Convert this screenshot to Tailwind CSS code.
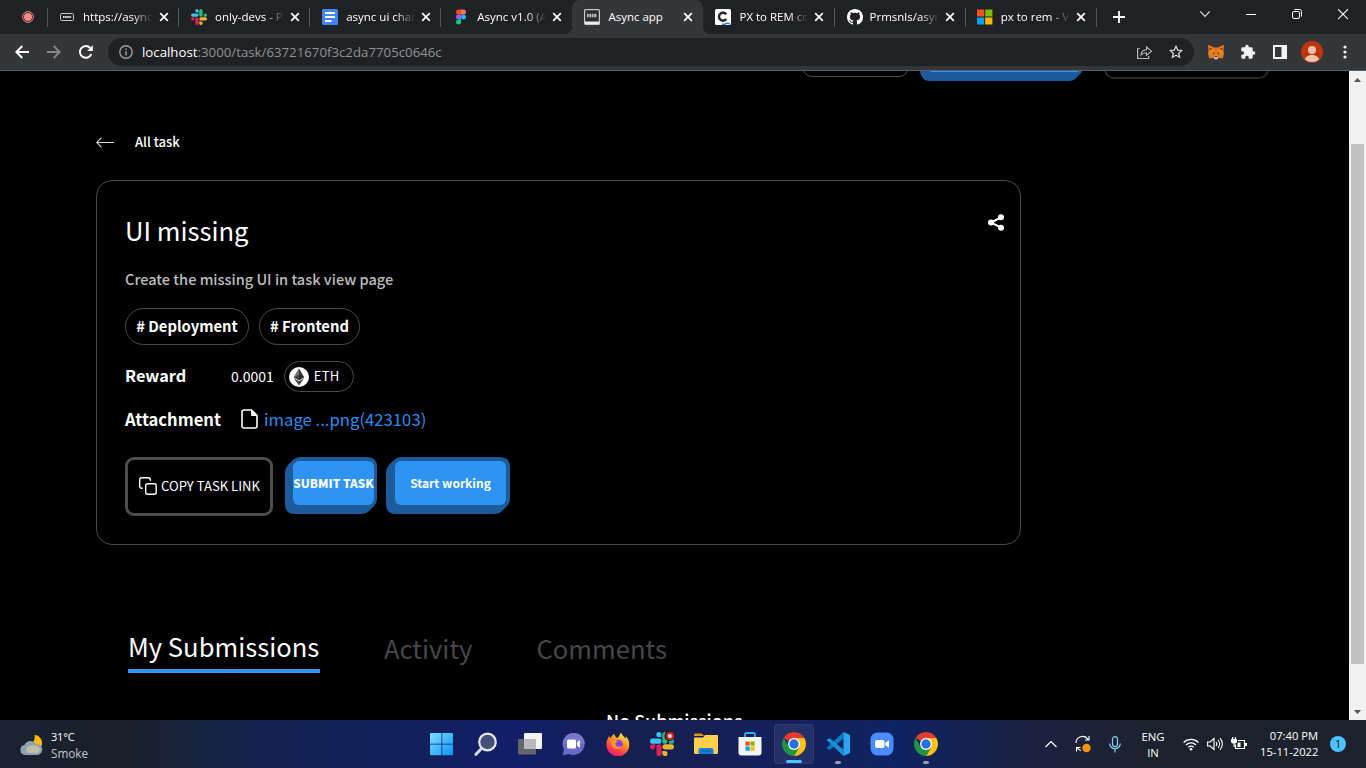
<!DOCTYPE html>
<html lang="en">
<head>
<meta charset="utf-8">
<title>Async app</title>
<script src="https://cdn.jsdelivr.net/npm/@tailwindcss/browser@4"></script>
</head>
<body class="w-[1366px] h-[768px] overflow-hidden bg-black font-['Open_Sans',sans-serif] text-white flex flex-col">

<svg class="hidden">
  <symbol id="x" viewBox="0 0 10 10"><path d="M1.2 1.2l7.6 7.6M8.8 1.2L1.2 8.8" stroke="#fff" stroke-width="1.7"/></symbol>
  <symbol id="slack" viewBox="0 0 16 16">
    <path fill="#36c5f0" d="M5.9 0a1.7 1.7 0 0 0 0 3.4h1.7V1.7A1.7 1.7 0 0 0 5.9 0zM5.9 4.4H1.7a1.7 1.7 0 0 0 0 3.4h4.2a1.7 1.7 0 0 0 0-3.4z"/>
    <path fill="#2eb67d" d="M16 6.1a1.7 1.7 0 0 0-3.4 0v1.7h1.7A1.7 1.7 0 0 0 16 6.1zM11.600 6.1V1.700a1.700 1.700 0 0 0-3.400 0v4.400a1.700 1.700 0 0 0 3.400 0z"/>
    <path fill="#ecb22e" d="M10 16a1.700 1.700 0 0 0 0-3.400H8.200v1.700A1.700 1.700 0 0 0 10 16zM10 11.600h4.300a1.700 1.700 0 0 0 0-3.400H10a1.700 1.700 0 0 0 0 3.400z"/>
    <path fill="#e01e5a" d="M0 9.900a1.700 1.700 0 0 0 3.400 0V8.200H1.700A1.700 1.700 0 0 0 0 9.900zM4.300 9.900v4.400a1.700 1.700 0 0 0 3.400 0V9.900a1.700 1.700 0 0 0-3.400 0z"/>
  </symbol>
  <symbol id="chrome" viewBox="0 0 24 24">
    <path fill="#e33b2e" d="M12 12L1.610 6A12 12 0 0 1 22.390 6z"/>
    <path fill="#fbc116" d="M12 12V6h10.390A12 12 0 0 1 12 24l5.200-9z"/>
    <path fill="#229342" d="M12 24A12 12 0 0 1 1.610 6l5.200 9L12 17.500l5.200-2.500z"/>
    <circle cx="12" cy="12" r="6" fill="#fff"/><circle cx="12" cy="12" r="4.700" fill="#2a6fe0"/>
  </symbol>
</svg>

<!-- tab strip -->
<header class="h-[34px] shrink-0 bg-[#202124] flex text-[11.5px] leading-[34px] font-medium">
  <div class="w-[48px] shrink-0 flex items-center justify-center pl-[8px] relative">
    <svg class="w-3 h-3" viewBox="0 0 12 12"><circle cx="6" cy="6" r="5.400" fill="none" stroke="#f28b82" stroke-width="1"/><circle cx="6" cy="6" r="4" fill="#f28b82"/></svg>
    <i class="absolute right-0 top-[8px] h-[19px] w-px bg-[#55585d]"></i>
  </div>
  <div class="w-[131.1px] shrink-0 pl-3 flex items-center relative">
    <svg class="w-4 h-4" viewBox="0 0 16 16"><rect x=".500" y="4.500" width="13" height="7" rx="1" fill="#202124" stroke="#c8c8c8"/><path d="M3 8h8.500" stroke="#ddd" stroke-width="2" stroke-dasharray="1.600 .500"/></svg>
    <span class="ml-[7px] w-[72px] whitespace-nowrap overflow-hidden [mask-image:linear-gradient(90deg,#000_50px,transparent_69px)]">https://async-</span>
    <svg class="w-[10px] h-[10px] ml-[4px]"><use href="#x"/></svg>
    <i class="absolute right-0 top-[8px] h-[19px] w-px bg-[#55585d]"></i>
  </div>
  <div class="w-[131.1px] shrink-0 pl-3 flex items-center relative">
    <svg class="w-4 h-4"><use href="#slack"/></svg>
    <span class="ml-2 w-[71px] whitespace-nowrap overflow-hidden [mask-image:linear-gradient(90deg,#000_50px,transparent_69px)]">only-devs - P</span>
    <svg class="w-[10px] h-[10px] ml-[4px]"><use href="#x"/></svg>
    <i class="absolute right-0 top-[8px] h-[19px] w-px bg-[#55585d]"></i>
  </div>
  <div class="w-[131.1px] shrink-0 pl-3 flex items-center relative">
    <svg class="w-4 h-4" viewBox="0 0 16 16"><rect width="16" height="16" rx="1.500" fill="#4285f4"/><path d="M3 4h10M3 8h10M3 12h6.500" stroke="#fff" stroke-width="1.800"/></svg>
    <span class="ml-2 w-[71px] whitespace-nowrap overflow-hidden [mask-image:linear-gradient(90deg,#000_50px,transparent_69px)]">async ui chan</span>
    <svg class="w-[10px] h-[10px] ml-[4px]"><use href="#x"/></svg>
    <i class="absolute right-0 top-[8px] h-[19px] w-px bg-[#55585d]"></i>
  </div>
  <div class="w-[131.1px] shrink-0 pl-3 flex items-center relative">
    <svg class="w-4 h-4" viewBox="0 0 16 16"><path fill="#f24e1e" d="M8 .500H5.500a2.500 2.500 0 0 0 0 5H8z"/><path fill="#ff7262" d="M8 .500h2.500a2.500 2.500 0 0 1 0 5H8z"/><path fill="#a259ff" d="M8 5.500H5.500a2.500 2.500 0 0 0 0 5H8z"/><circle cx="10.500" cy="8" r="2.500" fill="#1abcfe"/><path fill="#0acf83" d="M8 10.500H5.500A2.500 2.500 0 1 0 8 13z"/></svg>
    <span class="ml-2 w-[71px] whitespace-nowrap overflow-hidden [mask-image:linear-gradient(90deg,#000_50px,transparent_69px)]">Async v1.0 (A</span>
    <svg class="w-[10px] h-[10px] ml-[4px]"><use href="#x"/></svg>
  </div>
  <div class="w-[131.1px] shrink-0 pl-3 flex items-center relative bg-[#35363a] rounded-t-lg">
    <i class="absolute -left-2 bottom-0 w-2 h-2 bg-[radial-gradient(circle_at_0_0,#202124_8px,#35363a_8.5px)]"></i>
    <i class="absolute -right-2 bottom-0 w-2 h-2 bg-[radial-gradient(circle_at_100%_0,#202124_8px,#35363a_8.5px)]"></i>
    <svg class="w-4 h-4" viewBox="0 0 16 16"><rect x=".600" y=".600" width="14.800" height="14.800" rx="1" fill="#2c2d30" stroke="#c9c9c9" stroke-width="1.200"/><path d="M1 12.500h14v2.500H1z" fill="#eee"/><path d="M3 6.500h10" stroke="#bbb" stroke-width="3.500" stroke-dasharray="1.800 .600"/></svg>
    <span class="ml-2 whitespace-nowrap">Async app</span>
    <svg class="w-[10px] h-[10px] absolute left-[111px]"><use href="#x"/></svg>
  </div>
  <div class="w-[131.1px] shrink-0 pl-3 flex items-center relative">
    <svg class="w-4 h-4" viewBox="0 0 16 16"><rect width="16" height="16" rx="1.500" fill="#fff"/><path d="M11.300 5.400A4 4 0 1 0 11.300 10" fill="none" stroke="#222" stroke-width="2.400"/><path d="M7 14.800q2 1.200 3.500 0t4.500 0" fill="none" stroke="#2b7bf0" stroke-width="1.400"/></svg>
    <span class="ml-2 w-[71px] whitespace-nowrap overflow-hidden [mask-image:linear-gradient(90deg,#000_50px,transparent_69px)]">PX to REM co</span>
    <svg class="w-[10px] h-[10px] ml-[4px]"><use href="#x"/></svg>
    <i class="absolute right-0 top-[8px] h-[19px] w-px bg-[#55585d]"></i>
  </div>
  <div class="w-[131.1px] shrink-0 pl-3 flex items-center relative">
    <svg class="w-4 h-4" viewBox="0 0 16 16"><path fill="#fff" d="M8 0C3.580 0 0 3.580 0 8c0 3.540 2.290 6.530 5.470 7.590.4.070.55-.17.55-.38 0-.19-.01-.82-.01-1.490-2.010.37-2.530-.49-2.690-.94-.09-.23-.48-.94-.82-1.130-.28-.15-.68-.52-.01-.53.63-.01 1.080.58 1.230.82.72 1.210 1.870.87 2.330.66.07-.52.28-.87.51-1.070-1.780-.2-3.640-.89-3.640-3.950 0-.87.31-1.590.82-2.150-.08-.2-.36-1.020.08-2.120 0 0 .67-.21 2.200.82.64-.18 1.320-.27 2-.27s1.360.09 2 .27c1.530-1.040 2.200-.82 2.200-.82.44 1.100.16 1.920.08 2.120.51.56.82 1.270.82 2.150 0 3.070-1.870 3.750-3.650 3.950.29.25.54.73.54 1.480 0 1.070-.01 1.930-.01 2.200 0 .21.15.46.55.38A8.010 8.010 0 0 0 16 8c0-4.420-3.580-8-8-8z"/></svg>
    <span class="ml-[7px] w-[71px] whitespace-nowrap overflow-hidden [mask-image:linear-gradient(90deg,#000_50px,transparent_69px)]">Prmsnls/asyn</span>
    <svg class="w-[10px] h-[10px] ml-[4px]"><use href="#x"/></svg>
    <i class="absolute right-0 top-[8px] h-[19px] w-px bg-[#55585d]"></i>
  </div>
  <div class="w-[131.1px] shrink-0 pl-[11px] flex items-center relative">
    <svg class="w-4 h-4" viewBox="0 0 16 16"><path fill="#f25022" d="M0 .500h7.200v7H0z"/><path fill="#7fba00" d="M8.200.500h7.200v7H8.200z"/><path fill="#00a4ef" d="M0 8.500h7.200v7H0z"/><path fill="#ffb900" d="M8.200 8.500h7.200v7H8.200z"/></svg>
    <span class="ml-2 w-[71px] whitespace-nowrap overflow-hidden [mask-image:linear-gradient(90deg,#000_50px,transparent_69px)]">px to rem - V</span>
    <svg class="w-[10px] h-[10px] ml-[4px]"><use href="#x"/></svg>
    <i class="absolute right-0 top-[8px] h-[19px] w-px bg-[#55585d]"></i>
  </div>
  <svg class="w-[12px] h-[12px] ml-4 mt-[11px]" viewBox="0 0 12 12"><path d="M6 0v12M0 6h12" stroke="#fff" stroke-width="1.800"/></svg>
  <div class="ml-auto mr-[18px] flex">
    <svg class="w-[10px] h-[34px] mr-[36px]" viewBox="0 0 10 34"><path d="M.300 11.500L5 16.500l4.700-5" fill="none" stroke="#ddd" stroke-width="1.100"/></svg>
    <svg class="w-[10px] h-[34px] mr-[36px]" viewBox="0 0 10 34"><path d="M0 14.500h10" stroke="#fff"/></svg>
    <svg class="w-[10px] h-[34px] mr-[36px]" viewBox="0 0 10 34"><rect x=".500" y="11.500" width="7" height="7" rx="1.500" fill="none" stroke="#fff"/><path d="M2.500 9.500H7.500a2 2 0 0 1 2 2V16.500" fill="none" stroke="#fff"/></svg>
    <svg class="w-[10px] h-[34px]" viewBox="0 0 10 34"><path d="M0 9.200l10 10M10 9.200l-10 10" stroke="#fff" stroke-width="1.100"/></svg>
  </div>
</header>

<!-- toolbar -->
<nav class="h-[37px] shrink-0 bg-[#35363a] border-b border-[#5b5e62] flex items-center">
  <svg class="w-[14px] h-[14px] ml-[15px]" viewBox="0 0 14 14"><path d="M14 7H1.500M7.300 1L1.300 7l6 6" fill="none" stroke="#fff" stroke-width="1.900"/></svg>
  <svg class="w-[14px] h-[14px] ml-[18px]" viewBox="0 0 14 14"><path d="M0 7h12.500M6.700 1l6 6-6 6" fill="none" stroke="#85878a" stroke-width="1.900"/></svg>
  <svg class="w-[14px] h-[14px] ml-[18px]" viewBox="0 0 14 14"><path d="M12.300 9.200A5.900 5.900 0 1 1 11.300 3" fill="none" stroke="#fff" stroke-width="1.900"/><path d="M13.800.300V6H8.200z" fill="#fff"/></svg>
  <div class="ml-[15px] w-[1086px] h-7 rounded-full bg-[#202124] flex items-center text-[13.25px]">
    <svg class="ml-[11px] w-[14px] h-[14px]" viewBox="0 0 14 14"><circle cx="7" cy="7" r="6.200" fill="none" stroke="#9aa0a6" stroke-width="1.400"/><path d="M7 6.200v4.300M7 3.400v1.500" stroke="#9aa0a6" stroke-width="1.500"/></svg>
    <span class="ml-[9px] pt-px text-[#8f9398]"><span class="text-white">localhost</span>:3000/task/63721670f3c2da7705c0646c</span>
    <svg class="ml-auto w-4 h-4" viewBox="0 0 16 16"><path d="M.600 4.500V14.500h11V12M.600 4.500h2" fill="none" stroke="#b8babd" stroke-width="1.200"/><path d="M4 11c.300-3.200 2.200-5 5.500-5.200V3l5 4.200-5 4.200V8.700C7 8.700 5.300 9.400 4 11z" fill="none" stroke="#b8babd" stroke-width="1.100"/></svg>
    <svg class="ml-4 mr-[11px] w-[14px] h-[14px]" viewBox="0 0 14 14"><path d="M7 1.300l1.700 3.800 4.100.400-3.100 2.700.9 4.100L7 10.200l-3.600 2.100.9-4.100L1.200 5.500l4.100-.4z" fill="none" stroke="#d0d2d5" stroke-width="1.300"/></svg>
  </div>
  <svg class="ml-[14px] w-4 h-4" viewBox="0 0 16 16"><path fill="#e2761b" d="M0 .800L6 3.500h4l6-2.700-.6 6 .6 3.400-1.400 4.300-3.800-.8L9 15.500H7l-1.800-1.800-3.800.8L0 10.200l.6-3.400z"/><path fill="#f6a13b" d="M1 1.500L6 5l-1 4-4 .500L2 6zM15 1.500L10 5l1 4 4 .500L14 6z" opacity=".45"/><path fill="#763d16" d="M1.300 3.500L2 6l3-1zM14.700 3.500L14 6l-3-1z"/><path fill="#233447" d="M4.500 8.500l2 .5-.5 1.200zM11.500 8.500l-2 .5.5 1.200z"/><path fill="#d7c1b3" d="M5.500 13l1.300-1.300h2.400l1.300 1.300L9 15.200H7z"/><path fill="#161616" d="M6.600 12.200h2.800v1H6.600z"/></svg>
  <svg class="ml-4 w-4 h-4" viewBox="0 0 24 24"><path fill="#f1f3f4" d="M20.500 11H19V7a2 2 0 0 0-2-2h-4V3.500a2.500 2.500 0 0 0-5 0V5H4a2 2 0 0 0-2 2v3.800h1.500a2.700 2.700 0 0 1 0 5.400H2V20a2 2 0 0 0 2 2h3.800v-1.500a2.700 2.700 0 0 1 5.400 0V22H17a2 2 0 0 0 2-2v-4h1.500a2.500 2.500 0 0 0 0-5z"/></svg>
  <svg class="ml-[17px] w-[14px] h-[14px]" viewBox="0 0 14 14"><path fill="#f1f3f4" fill-rule="evenodd" d="M0 0h14v14H0zM2 2v10h6.500V2z"/></svg>
  <svg class="ml-[14px] w-[22px] h-[22px]" viewBox="0 0 22 22"><circle cx="11" cy="11" r="11" fill="#bf360c"/><circle cx="11" cy="9" r="4" fill="#efc3b5"/><path d="M4 18.500C4.500 15.500 7.500 14 11 14s6.500 1.500 7 4.500A11 11 0 0 1 4 18.500z" fill="#efc3b5"/></svg>
  <svg class="ml-[20px] w-[4px] h-[14px]" viewBox="0 0 4 14"><g fill="#f1f3f4"><circle cx="2" cy="2" r="1.600"/><circle cx="2" cy="7" r="1.600"/><circle cx="2" cy="12" r="1.600"/></g></svg>
</nav>

<!-- page -->
<div class="h-[649px] shrink-0 flex">
  <main class="w-[1349px] bg-black overflow-hidden font-['Noto_Sans_CJK_SC',sans-serif]">
    <div class="h-[10px] overflow-hidden flex items-start pl-[802px]">
      <div class="w-[107px] h-[36px] -mt-[30px] rounded-[10px] border border-[#4b4b4b]"></div>
      <svg class="ml-[11px] w-[162px] h-[10px]" viewBox="0 0 162 10"><path fill="#1c5c9d" d="M0 0h162q0 1-1 2l-6 6q-2 2-6 2H10Q1 10 0 0z"/><path d="M11 .500h147" stroke="#2f93f2"/></svg>
      <div class="ml-[22px] w-[165px] h-[38px] -mt-[30px] rounded-[10px] border-2 border-[#29292c]"></div>
    </div>
    <div class="pl-24">
      <div class="mt-[49px] h-6 flex items-center text-[13px] leading-6">
        <svg class="w-[18px] h-[11px]" viewBox="0 0 18 11"><path d="M18 5.500H.800M5.500.700L.700 5.500l4.800 4.800" fill="none" stroke="#d8d8d8" stroke-width="1.100"/></svg>
        <span class="ml-[21px] font-medium">All task</span>
      </div>
      <section class="mt-[26px] w-[925px] h-[365px] border border-[#4a4a4a] rounded-2xl pl-7 relative">
        <svg class="absolute right-[16px] top-[33px] w-4 h-[17px]" viewBox="0 0 16 17"><g fill="#fff"><circle cx="3" cy="8.500" r="3"/><circle cx="13" cy="3.300" r="3"/><circle cx="13" cy="13.700" r="3"/></g><path d="M13 3.300L3 8.500l10 5.200" fill="none" stroke="#fff" stroke-width="2"/></svg>
        <h1 class="pt-[29px] text-[25.6px] leading-10">UI missing</h1>
        <p class="mt-[17px] text-[14.55px] leading-6 font-medium text-[#bdbdbd]">Create the missing UI in task view page</p>
        <div class="mt-[17px] flex gap-[10px] text-[14.8px] leading-[33px] font-bold">
          <span class="w-[124px] h-[37px] text-center border border-[#4a4a4a] rounded-full"># Deployment</span>
          <span class="w-[101px] h-[37px] text-center border border-[#4a4a4a] rounded-full"># Frontend</span>
        </div>
        <div class="mt-4 h-[31px] flex items-center">
          <b class="w-[106px] pb-[3px] text-[16.3px] leading-6">Reward</b>
          <span class="text-[14px]">0.0001</span>
          <span class="ml-[10px] w-[70px] h-[31px] border border-[#4a4a4a] rounded-full flex items-center pl-[4px] text-[13px]">
            <svg class="w-5 h-5" viewBox="0 0 20 20"><circle cx="10" cy="10" r="10" fill="#fff"/><path d="M10 1.500L15.200 10.200 10 13.200 4.800 10.200z" fill="#343434"/><path d="M10 1.500V13.200L4.800 10.200z" fill="#777"/><path d="M10 7.800l5.200 2.400-5.200 3-5.200-3z" fill="#222" opacity=".6"/><path d="M4.800 11.200l5.200 3.100 5.200-3.100L10 18.500z" fill="#444"/></svg>
            <span class="ml-[5px] pb-[2px] tracking-[.3px]">ETH</span>
          </span>
        </div>
        <div class="mt-[13px] h-[30px] flex items-center">
          <b class="w-[116px] pb-[3px] text-[16.6px] leading-6">Attachment</b>
          <svg class="-mt-[2px] w-[17px] h-5" viewBox="0 0 17 20"><path d="M10.500 1H3a2 2 0 0 0-2 2v14a2 2 0 0 0 2 2h11a2 2 0 0 0 2-2V6.500z" fill="none" stroke="#fff" stroke-width="1.600"/><path d="M10.500 1v5.500H16z" fill="#fff" stroke="#fff"/></svg>
          <span class="ml-[6px] pb-[3px] text-[16.7px] leading-6 text-[#2b8cf0]">image ...png(423103)</span>
        </div>
        <div class="mt-[22px] flex items-start">
          <div class="w-[148px] h-[59px] border-[3px] border-[#4d4d4d] rounded-[9px] flex items-center pl-[11px] text-[13.1px]">
            <svg class="-mt-px w-[18px] h-[18px]" viewBox="0 0 18 18"><rect x="6.700" y="6.700" width="10.500" height="10.500" rx="2" fill="none" stroke="#fff" stroke-width="1.400"/><path d="M3.700 11.300H2.700a2 2 0 0 1-2-2V2.700a2 2 0 0 1 2-2h6.600a2 2 0 0 1 2 2v1" fill="none" stroke="#fff" stroke-width="1.400"/></svg>
            <span class="ml-[4px] pb-[2px] whitespace-nowrap">COPY TASK LINK</span>
          </div>
          <div class="ml-3 relative w-[92px] h-[57px] pl-2 pt-1">
            <svg class="absolute inset-0 w-[92px] h-[57px]" viewBox="0 0 92 57"><path fill="#1c5c9d" d="M0 15Q0 11 3 8L8 3Q11 0 15 0H82Q92 0 92 10V42Q92 46 89 49L84 54Q81 57 77 57H10Q0 57 0 47z"/></svg>
            <div class="relative w-[81px] h-[44px] rounded-[6px] bg-[#2f93f2] flex items-center justify-center text-[11.85px] font-black whitespace-nowrap">SUBMIT TASK</div>
          </div>
          <div class="ml-[9px] relative w-[124px] h-[57px] pl-[9px] pt-1">
            <svg class="absolute inset-0 w-[124px] h-[57px]" viewBox="0 0 124 57"><path fill="#1c5c9d" d="M0 15Q0 11 3 8L8 3Q11 0 15 0H114Q124 0 124 10V42Q124 46 121 49L116 54Q113 57 109 57H10Q0 57 0 47z"/></svg>
            <div class="relative w-[111px] h-[44px] rounded-[6px] bg-[#2f93f2] flex items-center justify-center text-[12px] font-bold">Start working</div>
          </div>
        </div>
      </section>
      <div class="mt-[81px] ml-8 flex text-[25.6px] leading-10">
        <span class="w-[192px] h-[47px] border-b-4 border-[#2f93f2] whitespace-nowrap">My Submissions</span>
        <span class="ml-[64px] pt-[2px] w-[90px] text-[#46474b]">Activity</span>
        <span class="ml-[62.5px] pt-[2px] text-[#46474b]">Comments</span>
      </div>
      <p class="mt-[35px] ml-[510px] text-[17.9px] leading-6 font-medium">No Submissions</p>
    </div>
  </main>
  <aside class="w-[17px] bg-[#f1f1f1] flex flex-col items-center">
    <svg class="w-[17px] h-[17px]" viewBox="0 0 17 17"><path d="M5 11l3.500-4L12 11z" fill="#505050"/></svg>
    <i class="mt-[56px] w-[13px] h-[520px] bg-[#c1c1c1]"></i>
    <svg class="mt-auto w-[17px] h-[17px]" viewBox="0 0 17 17"><path d="M5 7l3.500 4L12 7z" fill="#505050"/></svg>
  </aside>
</div>

<!-- taskbar -->
<footer class="h-12 shrink-0 flex items-center relative bg-[linear-gradient(90deg,#1a2130_0px,#1a212c_130px,#142350_260px,#12205f_430px,#101f68_520px,#171f4f_640px,#15205a_760px,#0f2362_900px,#1b2140_1030px,#1c222d_1150px,#1c222d_1366px)]">
  <svg class="ml-[19px] w-6 h-6" viewBox="0 0 24 24"><path d="M15.500 3a8 8 0 0 1 7 11l-4 2-5-5A9 9 0 0 0 15.500 3z" fill="#fbb90f"/><path d="M6 23a5 5 0 0 1-.5-9.900A6.500 6.500 0 0 1 17 12a5.600 5.600 0 0 1 2 11z" fill="#8fa3b8"/><path d="M9 21a4 4 0 0 1 1-7q5-2 10 1 2 3-1 6z" fill="#c9c9a0" opacity=".75"/></svg>
  <div class="ml-[8px] pt-[2px] text-[11px] leading-4">
    <div class="tracking-[-.2px]">31°C</div><div class="text-[11.7px] text-[#c4c7cc]">Smoke</div>
  </div>
  <div class="absolute left-[430px] top-0 h-12 flex items-center gap-5">
    <svg class="w-6 h-6" viewBox="0 0 24 24"><defs><linearGradient id="w" x2="1" y2="1"><stop stop-color="#7fe0ff"/><stop offset="1" stop-color="#0a93f5"/></linearGradient></defs><path fill="url(#w)" d="M0 2q0-1 1-1h10.500v10.700H0zM12.300 1H22q1 0 1 1v9.700H12.300zM0 12.500h11.500V23.200H1q-1 0-1-1zM12.300 12.500H23v9.700q0 1-1 1h-9.700z"/></svg>
    <svg class="w-6 h-6" viewBox="0 0 24 24"><circle cx="13.500" cy="10" r="8.300" fill="#46507f" stroke="#e6e8ee" stroke-width="2.200"/><path d="M7.500 16.500L2 22.300" stroke="#d8dbe2" stroke-width="3" stroke-linecap="round"/></svg>
    <svg class="w-6 h-6" viewBox="0 0 24 24"><rect x="6" y="1" width="18" height="16" rx="1" fill="#f3f3f3"/><rect x="0" y="7" width="18" height="15.500" rx="1" fill="#666668"/><path d="M6 7h12v10H6z" fill="#b9b9bb"/></svg>
    <svg class="w-6 h-6" viewBox="0 0 24 24"><path d="M12 1a11 11 0 1 1-5 21L.500 23.300 2 17.500A11 11 0 0 1 12 1z" fill="#6a68c8"/><path d="M12 1a11 11 0 0 1 11 11H1A11 11 0 0 1 12 1z" fill="#8480d4" opacity=".6"/><rect x="5" y="7.500" width="9" height="9" rx="1.500" fill="#fff"/><path d="M15 10.500l3-2.500v8l-3-2.500z" fill="#fff"/></svg>
    <svg class="w-6 h-6" viewBox="0 0 24 24"><defs><linearGradient id="f" x1=".8" y1="0" x2=".3" y2="1"><stop stop-color="#fff14a"/><stop offset=".4" stop-color="#ff9a1f"/><stop offset=".75" stop-color="#ff3b47"/><stop offset="1" stop-color="#e31587"/></linearGradient></defs><path d="M15 .500c1 3 3 3.500 4.500 6 .5-.5.5-1.500.3-2.500 2 2 3.700 5.500 3.500 9A11.200 11.200 0 0 1 .500 13C.300 9 2 6.500 3 4c.500 1 1 1.500 1.500 2.200C6 3 7.500 3 8 1.500c.7 2 1.500 3.500 3 4.500 2-.5 2.500-3.500 4-5.500z" fill="url(#f)"/><circle cx="12.300" cy="12.300" r="4.600" fill="#8a3fe0"/><path d="M5 8c2.500-1.500 5 0 7 1.500-1.500.5-3 1-2.500 3 1 3 5 3 7 1-1 4-8 5-10.500.5z" fill="#ff9a1f"/></svg>
    <svg class="w-6 h-6 overflow-visible" viewBox="0 0 24 24"><use href="#slack" width="24" height="24"/><circle cx="19.500" cy="4" r="5" fill="#1a1a2a"/><circle cx="20" cy="4" r="4" fill="#e02020"/><circle cx="20" cy="4" r="1.900" fill="#fff"/></svg>
    <svg class="w-6 h-6" viewBox="0 0 24 24"><path d="M0 3q0-1.500 1.500-1.500H8l2 2.500H0z" fill="#d99a13"/><path d="M0 5.500h9l2-2.500h13v17.500q0 1.500-1.500 1.500h-21Q0 22 0 20.500z" fill="#fdcf4d"/><path d="M4.500 22v-4q0-2 2-2h11q2 0 2 2v4z" fill="#1580d0"/><path d="M8 19h8" stroke="#0f5fa8" stroke-width="1.200"/></svg>
    <svg class="w-6 h-6" viewBox="0 0 24 24"><path d="M7 6V2.500Q7 1 8.500 1h7Q17 1 17 2.500V6" fill="none" stroke="#2db0f0" stroke-width="1.800"/><path d="M.500 5h23v15.500q0 3-3 3h-17q-3 0-3-3z" fill="#f2f4f6"/><path fill="#f25022" d="M7.500 9.500h4.200v4.200H7.500z"/><path fill="#7fba00" d="M12.500 9.500h4.200v4.200h-4.200z"/><path fill="#00a4ef" d="M7.500 14.500h4.200v4.200H7.500z"/><path fill="#ffb900" d="M12.500 14.500h4.200v4.200h-4.200z"/></svg>
    <div class="-mx-2 w-10 h-10 rounded-[4px] bg-white/[0.07] border border-white/5 flex items-center justify-center relative"><svg class="w-6 h-6"><use href="#chrome"/></svg><i class="absolute bottom-0 w-4 h-[3px] rounded-full bg-[#4cc2ff]"></i></div>
    <div class="h-10 flex items-center justify-center relative"><svg class="w-6 h-6" viewBox="0 0 24 24"><path d="M17.500 0v6.500L3.500 18 .500 16z" fill="#0a7bc8"/><path d="M17.500 24v-6.500L3.500 6l-3 2z" fill="#1a8fd8"/><path d="M17.500 0L24 3v18l-6.500 3z" fill="#2aa5ee"/></svg><i class="absolute bottom-0 w-[6px] h-[3px] rounded-full bg-[#9a9ba8]"></i></div>
    <svg class="w-6 h-6" viewBox="0 0 24 24"><rect x=".500" y=".500" width="23" height="23" rx="7" fill="#4a8cff"/><rect x="5" y="8" width="9.500" height="8" rx="2" fill="#fff"/><path d="M15.300 10.800l3.700-2.600v7.600l-3.700-2.600z" fill="#fff"/></svg>
    <div class="h-10 flex items-center justify-center relative"><svg class="w-6 h-6"><use href="#chrome"/></svg><i class="absolute bottom-0 w-[6px] h-[3px] rounded-full bg-[#9a9ba8]"></i></div>
  </div>
  <div class="ml-auto flex items-center text-[11px] leading-4">
    <svg class="w-3 h-3" viewBox="0 0 12 12"><path d="M.500 9L6 3.500 11.500 9" fill="none" stroke="#fff" stroke-width="1.200"/></svg>
    <svg class="ml-[17px] w-[18px] h-[18px]" viewBox="0 0 18 18"><path d="M2 8A6.500 6.500 0 0 1 14 4.500M15 1v4h-4M7 15.500A6.500 6.500 0 0 1 3 12.500M2.500 16.500v-4h4" fill="none" stroke="#fff" stroke-width="1.100"/><circle cx="12.500" cy="13" r="4.200" fill="#f7930a"/></svg>
    <svg class="ml-[17px] w-[12px] h-[17px]" viewBox="0 0 12 17"><rect x="3.500" y=".700" width="5" height="10" rx="2.500" fill="none" stroke="#7fd3e6" stroke-width="1.200"/><path d="M.700 7.500a5.300 5.300 0 0 0 10.600 0M6 13v3.500" fill="none" stroke="#7fd3e6" stroke-width="1.200"/></svg>
    <div class="ml-[20px] mr-px pt-[2px] w-6 text-center text-[11.3px]"><div>ENG</div><div>IN</div></div>
    <svg class="ml-[17px] w-4 h-4" viewBox="0 0 16 16"><path d="M.600 6.500a10.500 10.500 0 0 1 14.800 0M3 9a7 7 0 0 1 10 0M5.300 11.300a3.800 3.800 0 0 1 5.400 0" fill="none" stroke="#fff" stroke-width="1.200"/><circle cx="8" cy="13.300" r="1.300" fill="#fff"/></svg>
    <svg class="ml-[8px] w-4 h-4" viewBox="0 0 16 16"><path d="M.600 6h2.500L7 2.500v11L3.100 10H.600z" fill="none" stroke="#fff" stroke-width="1.100"/><path d="M9 6a3 3 0 0 1 0 4M11 4a6 6 0 0 1 0 8M13 2.200a8.500 8.500 0 0 1 0 11.600" fill="none" stroke="#fff" stroke-width="1.100"/></svg>
    <svg class="ml-[8px] w-4 h-4" viewBox="0 0 16 16"><path d="M7 4.500h6.500v8H4.500V8.500" fill="none" stroke="#fff" stroke-width="1.200"/><path d="M14 7h2v3h-2z" fill="#fff"/><path d="M7 6.500h2.500v4.500H6.500V8z" fill="#fff"/><path d="M0 3h6v2.500a2 2 0 0 1-2 2H2a2 2 0 0 1-2-2zM1 1h1.200v2H1zM3.800 1H5v2H3.800zM2.500 7h1.200v4H2.500z" fill="#fff"/></svg>
    <div class="ml-[13px] mr-px w-[58px] text-right whitespace-nowrap text-[11.2px]"><div>07:40 PM</div><div>15-11-2022</div></div>
    <span class="ml-[11px] mr-5 w-4 h-4 rounded-full bg-[#4cc2ff] text-black text-[10px] text-center leading-4">1</span>
  </div>
</footer>
</body>
</html>
